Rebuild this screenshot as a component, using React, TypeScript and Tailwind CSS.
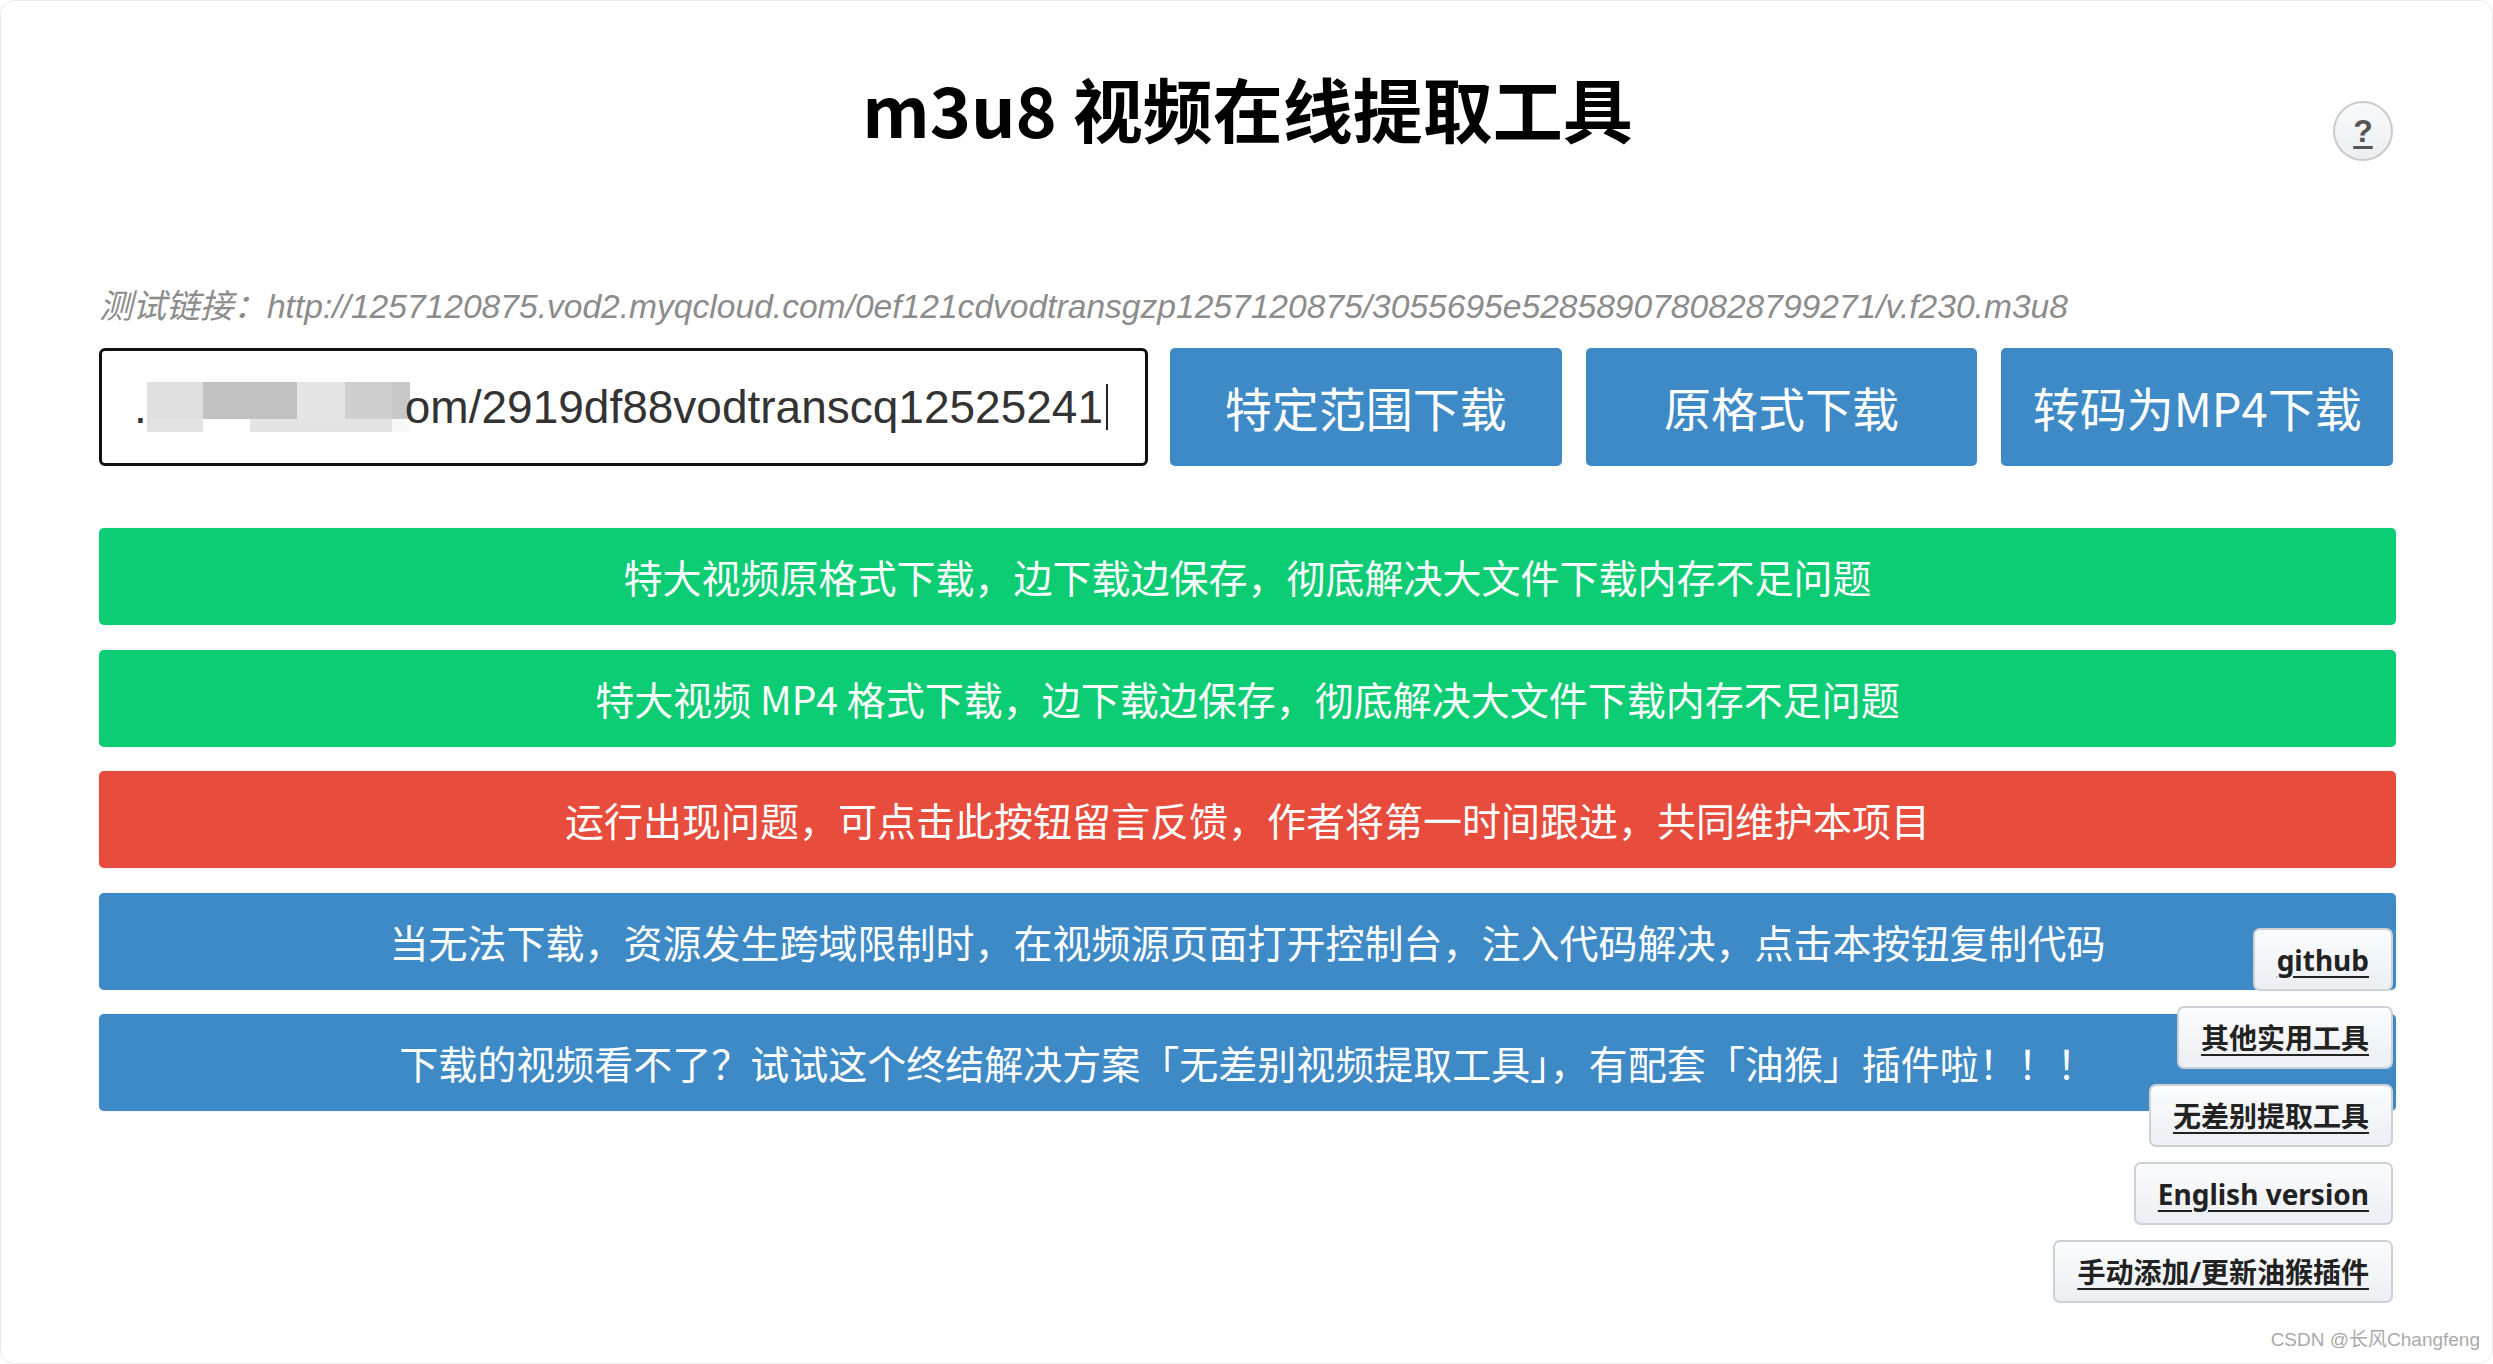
import React from "react";

const bars = [
  { text: "特大视频原格式下载，边下载边保存，彻底解决大文件下载内存不足问题", color: "bg-[#0ccd73]" },
  { text: "特大视频 MP4 格式下载，边下载边保存，彻底解决大文件下载内存不足问题", color: "bg-[#0ccd73]" },
  { text: "运行出现问题，可点击此按钮留言反馈，作者将第一时间跟进，共同维护本项目", color: "bg-[#e74c3c]" },
  { text: "当无法下载，资源发生跨域限制时，在视频源页面打开控制台，注入代码解决，点击本按钮复制代码", color: "bg-[#3e8ac7]" },
  { text: "下载的视频看不了？试试这个终结解决方案「无差别视频提取工具」，有配套「油猴」插件啦！！！", color: "bg-[#3e8ac7]" },
];

const sideLinks = ["github", "其他实用工具", "无差别提取工具", "English version", "手动添加/更新油猴插件"];

const actions = ["特定范围下载", "原格式下载", "转码为MP4下载"];

// pixelated mosaic hiding part of the url
const mosaic = [
  { w: "w-[56px]", top: "bg-[#e0e0e0]", bottom: "bg-[#e3e3e3]" },
  { w: "w-[47px]", top: "bg-[#c1c1c1]", bottom: "bg-white" },
  { w: "w-[47px]", top: "bg-[#c1c1c1]", bottom: "bg-[#e4e4e4]" },
  { w: "w-[48px]", top: "bg-[#e6e6e6]", bottom: "bg-[#e4e4e4]" },
  { w: "w-[47px]", top: "bg-[#cfcfcf]", bottom: "bg-[#e4e4e4]" },
  { w: "w-[18px]", top: "bg-[#c8c8c8]", bottom: "bg-[#f8f8f8]" },
];

export default function App() {
  return (
    <div className="min-h-screen w-full bg-white">
      <div className="relative h-[1364px] overflow-hidden rounded-[14px] border border-[#ececec] bg-white font-['Noto_Sans_CJK_SC',sans-serif]">
        <div className="pl-[98px] pr-[96px] pt-[63px]">
          <h1 className="text-center text-[70px] leading-[88px] font-bold text-black">
            m3u8 视频在线提取工具
          </h1>

          <p className="mt-[135px] text-[33.6px] leading-[40px] italic text-[#8c8c8c] font-['Liberation_Sans','Noto_Sans_CJK_SC',sans-serif]">
            测试链接：http://1257120875.vod2.myqcloud.com/0ef121cdvodtransgzp1257120875/3055695e5285890780828799271/v.f230.m3u8
          </p>

          <div className="mt-[21px] flex h-[118px] gap-[22px]">
            <div className="flex w-[1049px] shrink-0 items-center rounded-[6px] border-[3px] border-[#111] pl-[32px] text-[46px] text-[#333] font-['Liberation_Sans',sans-serif]">
              <span>.</span>
              <div className="flex">
                {mosaic.map((m, i) => (
                  <div key={i} className={`flex flex-col ${m.w}`}>
                    <div className={`h-[37px] ${m.top}`} />
                    <div className={`h-[13px] ${m.bottom}`} />
                  </div>
                ))}
              </div>
              <span className="-ml-[5px]">om/2919df88vodtranscq12525241</span>
              <span className="ml-[3px] h-[46px] w-[2px] bg-[#222]" />
            </div>

            <div className="mr-[3px] flex flex-1 gap-[24px]">
              {actions.map((a) => (
                <button
                  key={a}
                  className="flex flex-1 items-center justify-center rounded-[5px] bg-[#3e8ac7] text-[47px] text-white"
                >
                  {a}
                </button>
              ))}
            </div>
          </div>

          <div className="mt-[62px] flex flex-col gap-[24.5px]">
            {bars.map((b) => (
              <div
                key={b.text}
                className={`flex h-[97px] items-center justify-center rounded-[5px] text-[39px] text-white shadow-[0_0_2px_rgba(0,0,0,0.12)] ${b.color}`}
              >
                {b.text}
              </div>
            ))}
          </div>
        </div>

        <button className="absolute right-[99px] top-[100px] flex h-[60px] w-[60px] items-center justify-center rounded-full border-2 border-[#cbcbcb] bg-linear-to-b from-[#f9fafb] to-[#eceff3] text-[32px] font-bold text-[#555] underline decoration-[3px] underline-offset-[4px] font-['Liberation_Sans',sans-serif]">
          ?
        </button>

        <div className="absolute right-[99px] top-[927px] flex flex-col items-end gap-[15px]">
          {sideLinks.map((s) => (
            <div
              key={s}
              className="flex h-[63px] items-center rounded-[7px] border-2 border-[#cdd1d6] bg-linear-to-b from-[#fbfcfd] to-[#eceff3] px-[22px] text-[28px] font-bold text-[#222] underline decoration-2 underline-offset-[5px] font-['Noto_Sans','Noto_Sans_CJK_SC',sans-serif]"
            >
              {s}
            </div>
          ))}
        </div>

        <div className="absolute bottom-[9px] right-[12px] text-[19px] text-[#aaaaaa] font-['Liberation_Sans','Noto_Sans_CJK_SC',sans-serif]">
          CSDN @长风Changfeng
        </div>
      </div>
    </div>
  );
}
